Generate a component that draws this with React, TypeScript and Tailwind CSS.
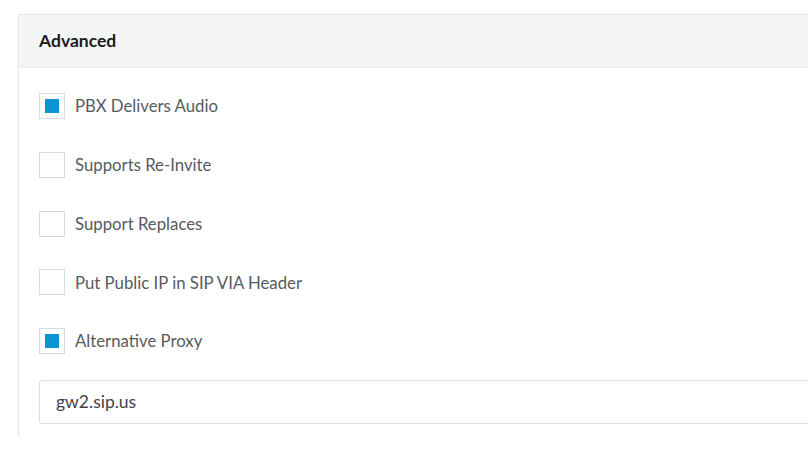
import React from "react";

const items = [
  { label: "PBX Delivers Audio", checked: true },
  { label: "Supports Re-Invite", checked: false },
  { label: "Support Replaces", checked: false },
  { label: "Put Public IP in SIP VIA Header", checked: false },
  { label: "Alternative Proxy", checked: true },
];

function Check({ checked }: { checked: boolean }) {
  return (
    <span className="flex h-[26px] w-[26px] shrink-0 items-center justify-center border border-[#d3dde1] bg-white">
      {checked && <span className="block h-[14px] w-[14px] bg-[#0a94d3]" />}
    </span>
  );
}

export default function App() {
  return (
    <div className="h-[455px] w-[808px] overflow-hidden bg-white pl-[18px] pt-[14px]" style={{ fontFamily: "Lato, 'Open Sans', sans-serif" }}>
      <div className="h-[423px] w-[820px] border-l border-t border-[#e3e8ea]">
        <div className="flex h-[53px] items-center border-b border-[#e8ecee] bg-[#f4f6f6] pl-[20px]">
          <span className="text-[17.5px] font-bold text-[#1a1a1a]">Advanced</span>
        </div>
        <div className="pl-[20px] pt-[25px]">
          {items.map((it, i) => (
            <div key={i} className="mb-[32.75px] flex h-[26px] items-center gap-[10px]">
              <Check checked={it.checked} />
              <span className="text-[16.75px] text-[#555b60]">{it.label}</span>
            </div>
          ))}
          <div className="-mt-[7px] flex h-[44px] w-[800px] items-center rounded-[3px] border border-[#d8dfe2] pl-[16px] text-[17.5px] text-[#3e4245]">
            gw2.sip.us
          </div>
        </div>
      </div>
    </div>
  );
}
